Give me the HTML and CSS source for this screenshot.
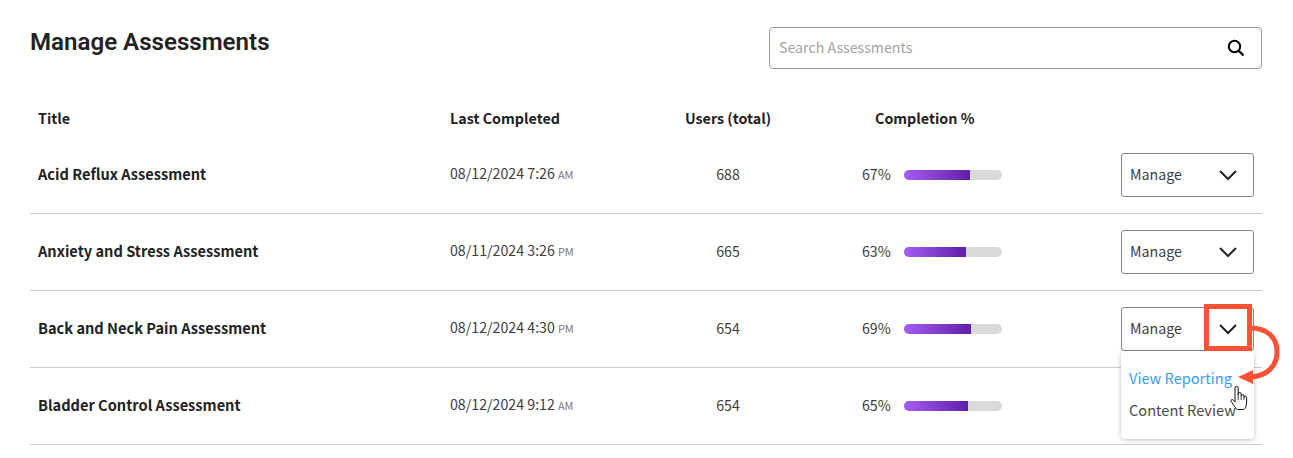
FILE: index.html
```html
<!DOCTYPE html>
<html lang="en">

<head>
    <meta charset="UTF-8">
    <title>Manage Assessments</title>
    <link rel="stylesheet" href="styles.css">
</head>

<body>
    <div class="page">
        <div class="top">
            <h1>Manage Assessments</h1>
            <div class="search">
                <span class="search-text">Search Assessments</span>
                <svg class="search-icon" width="18" height="18" viewBox="0 0 18 18">
                    <circle cx="7.500" cy="7.500" r="5.700" fill="none" stroke="#000" stroke-width="2"/>
                    <path d="M11.500 11.500L16.500 16.500" stroke="#000" stroke-width="2.400" fill="none"/>
                </svg>
            </div>
        </div>

        <div class="row head">
            <div>Title</div>
            <div>Last Completed</div>
            <div class="users">Users (total)</div>
            <div class="head-pct">Completion %</div>
            <div></div>
        </div>

        <div class="row">
            <div class="name">Acid Reflux Assessment</div>
            <div class="date">08/12/2024 7:26<span class="ampm">AM</span></div>
            <div class="users">688</div>
            <div class="pct"><span class="pct-num">67%</span><div class="bar"><div class="fill" style="width: 67%"></div></div></div>
            <div class="manage"><span>Manage</span><svg width="20" height="12" viewBox="0 0 20 12"><path d="M2 2l8 8 8-8" fill="none" stroke="#222" stroke-width="2"/></svg></div>
        </div>
        <div class="row">
            <div class="name">Anxiety and Stress Assessment</div>
            <div class="date">08/11/2024 3:26<span class="ampm">PM</span></div>
            <div class="users">665</div>
            <div class="pct"><span class="pct-num">63%</span><div class="bar"><div class="fill" style="width: 63%"></div></div></div>
            <div class="manage"><span>Manage</span><svg width="20" height="12" viewBox="0 0 20 12"><path d="M2 2l8 8 8-8" fill="none" stroke="#222" stroke-width="2"/></svg></div>
        </div>
        <div class="row">
            <div class="name">Back and Neck Pain Assessment</div>
            <div class="date">08/12/2024 4:30<span class="ampm">PM</span></div>
            <div class="users">654</div>
            <div class="pct"><span class="pct-num">69%</span><div class="bar"><div class="fill" style="width: 68%"></div></div></div>
            <div class="manage open">
                <span>Manage</span><svg width="20" height="12" viewBox="0 0 20 12"><path d="M2 2l8 8 8-8" fill="none" stroke="#222" stroke-width="2"/></svg>
                <div class="menu">
                    <div class="menu-item active">View Reporting</div>
                    <div class="menu-item">Content Review</div>
                </div>
                <div class="callout"></div>
                <svg class="arrow" width="50" height="64" viewBox="0 0 50 64">
                    <path d="M13 5C30 5 40 14 40 29C40 43 30 53 14 54" fill="none" stroke="#fb5235" stroke-width="5"/>
                    <path d="M1 54L16 47L16 61Z" fill="#fb5235"/>
                </svg>
                <svg class="hand" width="18" height="26" viewBox="0 0 18 26">
                    <path d="M5 13V3a1.600 1.600 0 0 1 3.200 0V10V9a1.500 1.500 0 0 1 3 0V11a1.400 1.400 0 0 1 2.800 0V12.500a1.300 1.300 0 0 1 2.600 0V18c0 3-1.500 6-3 6.500H7.500C6 24 4.500 21 1.800 17.500C.8 16 1 14.500 2 14.500C3 14.500 4 15.500 5 17Z" fill="#fff" stroke="#111" stroke-width="1"/>
                    <path d="M8.200 10v5M11.200 11v4M14 12.500V15" stroke="#111" stroke-width=".8" fill="none"/>
                </svg>
            </div>
        </div>
        <div class="row">
            <div class="name">Bladder Control Assessment</div>
            <div class="date">08/12/2024 9:12<span class="ampm">AM</span></div>
            <div class="users">654</div>
            <div class="pct"><span class="pct-num">65%</span><div class="bar"><div class="fill" style="width: 65%"></div></div></div>
            <div></div>
        </div>
    </div>
</body>

</html>
```

FILE: styles.css
```css
* {
    padding: 0;
    margin: 0;
    box-sizing: border-box;
}

body {
    background: #fff;
    color: #3d3d3d;
    font-family: "Noto Sans CJK SC", "Noto Sans", sans-serif;
    font-size: 14.2px;
    line-height: 20px;
    overflow: hidden;
}

.page {
    padding: 27px 31px 0 30px;
}

.top {
    display: flex;
    justify-content: space-between;
    align-items: flex-start;
    height: 70px;
}

h1 {
    font-family: Roboto, "Liberation Sans", sans-serif;
    font-size: 24.100px;
    font-weight: 600;
    line-height: 30px;
    color: #222;
}

.search {
    width: 493px;
    height: 42px;
    border: 1px solid #999;
    border-radius: 4px;
    display: flex;
    align-items: center;
    justify-content: space-between;
    padding: 0 16px 0 9px;
}

.search-text {
    color: #a3a3a3;
    padding-bottom: 2px;
}

.row {
    display: grid;
    grid-template-columns: 412px 200px 156px 315px 133px;
    align-items: center;
    height: 77px;
    padding: 0 8px;
    border-bottom: 1px solid #ccc;
}

.row.head {
    height: 40px;
    padding-top: 2px;
    border-bottom: 0;
    font-size: 14.300px;
    font-weight: 700;
    color: #222;
}

.name {
    font-size: 14.600px;
    font-weight: 700;
    color: #222;
    padding-bottom: 3px;
}

.date {
    padding-bottom: 3px;
}

.row .users {
    text-align: center;
}

.row:not(.head) .users {
    padding-bottom: 3px;
}

.head-pct {
    padding-left: 69px;
}

.ampm {
    font-size: 11px;
    color: #778;
    margin-left: 3px;
}

.pct {
    display: flex;
    align-items: center;
    padding-left: 56px;
}

.pct-num {
    width: 42px;
    padding-bottom: 2px;
}

.bar {
    width: 98px;
    height: 10px;
    border-radius: 5px;
    background: #d9d9d9;
    overflow: hidden;
}

.fill {
    height: 100%;
    background: linear-gradient(to right, #a55df2, #5f1fa8);
}

.manage {
    position: relative;
    height: 44px;
    border: 1px solid #888;
    border-radius: 3px;
    display: flex;
    align-items: center;
    justify-content: space-between;
    padding: 0 15px 0 8px;
}

.manage > span {
    padding-bottom: 2px;
}

.menu {
    position: absolute;
    top: 43px;
    left: -1px;
    width: 133px;
    height: 88px;
    padding-top: 12px;
    background: #fff;
    border-radius: 4px;
    box-shadow: 0 1px 5px rgba(0, 0, 0, 0.25);
    font-size: 14.600px;
}

.menu-item {
    height: 32px;
    line-height: 30px;
    padding-left: 8px;
    white-space: nowrap;
    color: #4a4a4a;
}

.menu-item.active {
    color: #3a9cf0;
}

.callout {
    position: absolute;
    left: 82px;
    top: -4px;
    width: 48px;
    height: 47px;
    border: 5px solid #fb5235;
}

.arrow {
    position: absolute;
    left: 115px;
    top: 15px;
}

.hand {
    position: absolute;
    left: 108px;
    top: 77px;
}
```
